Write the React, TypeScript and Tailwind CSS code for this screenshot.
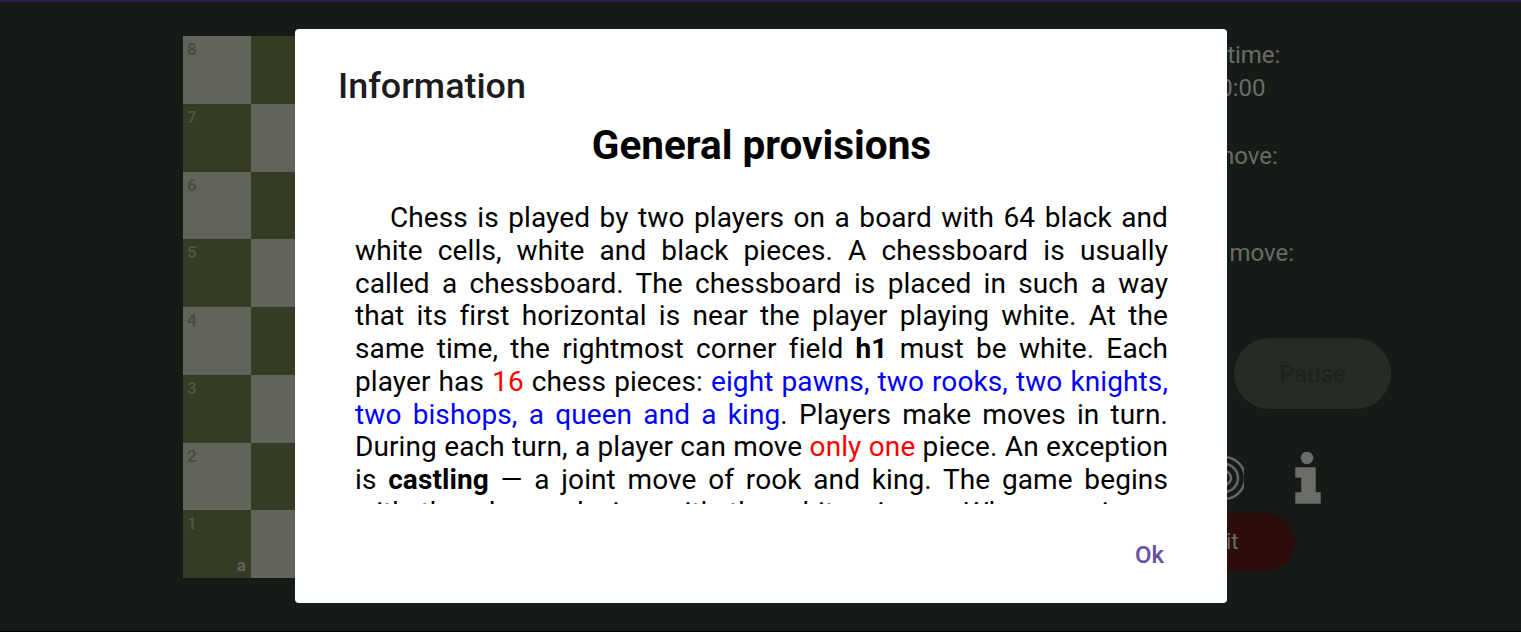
const ranks = [8, 7, 6, 5, 4, 3, 2, 1];
const files = [0, 1, 2, 3, 4, 5, 6, 7];

function Board() {
  return (
    <div className="grid h-[542px] w-[542px] shrink-0 grid-cols-8 grid-rows-8">
      {ranks.map((rank, r) =>
        files.map((file) => {
          const light = (r + file) % 2 === 0;
          return (
            <div className={`relative ${light ? "bg-[#62635a]" : "bg-[#343c24]"}`} key={`${rank}-${file}`}>
              {file === 0 && (
                <span className={`absolute left-[4px] top-[3px] text-[17px] font-bold leading-[20px] ${light ? "text-[#4a4e3d]" : "text-[#50553f]"}`}>
                  {rank}
                </span>
              )}
              {rank === 1 && file === 0 && (
                <span className="absolute bottom-[3px] right-[5px] text-[17px] font-bold leading-[20px] text-[#62635a]">a</span>
              )}
            </div>
          );
        }),
      )}
    </div>
  );
}

function Sidebar() {
  return (
    <div className="ml-[441px] flex w-[240px] shrink-0 flex-col text-[24px] leading-[32px] text-[#6a6b68]">
      <div className="mt-[3px] -ml-[8px]">Game time:</div>
      <div className="mt-[1px] pl-[7px]">00:00:00</div>
      <div className="mt-[36px] -ml-[5px]">Last move:</div>
      <div className="mt-[65px] pl-[8px]">Next move:</div>
      <div className="mt-[69px] flex items-center gap-[12px]">
        <button className="h-[71px] w-[56px] rounded-[36px] bg-[#272b26]" />
        <button className="h-[71px] w-[157px] rounded-[36px] bg-[#272b26] text-[24px] font-medium text-[#1f231e]">Pause</button>
      </div>
      <div className="mt-[38px] flex h-[64px] items-center">
        <svg className="ml-[4px] h-[60px] w-[74px]" viewBox="0 0 74 60" fill="none" stroke="#666765" strokeWidth="2.5">
          <circle cx="54" cy="29" r="7" />
          <circle cx="54" cy="29" r="14" />
          <circle cx="54" cy="29" r="21" />
        </svg>
        <svg className="mb-[2px] ml-[51px] h-[52px] w-[26px]" viewBox="0 0 26 52" fill="#6c6c6a" stroke="#6c6c6a" strokeWidth="1.5" strokeLinejoin="round">
          <circle cx="12" cy="6" r="5.5" />
          <path d="M1 16H20V41H25V51H1V41H7V25H1Z" />
        </svg>
      </div>
      <button className="mt-[2px] h-[58px] w-[129px] rounded-[29px] bg-[#2d0c0c] pr-[20px] text-[22px] text-[#6a6b68]">Exit</button>
    </div>
  );
}

function InfoDialog() {
  return (
    <div className="absolute left-[295px] top-[27px] flex h-[574px] w-[932px] flex-col rounded-[4px] bg-white">
      <h1 className="pl-[43px] pt-[36px] text-[35.9px] font-medium leading-[42px] text-[#1c1b1f]">Information</h1>
      <div className="ml-[60px] mr-[59px] mt-[15px] h-[382px] overflow-hidden text-black">
        <h2 className="text-center text-[40.5px] font-bold leading-[46px]">General provisions</h2>
        <p className="mt-[34px] text-justify indent-[35px] text-[28px] leading-[32.75px] tracking-[0.1px]">
          Chess is played by two players on a board with 64 black and white cells, white and black pieces. A chessboard is usually called a chessboard. The chessboard is placed in such a way that its first horizontal is near the player playing white. At the same time, the rightmost corner field <b>h1</b> must be white. Each player has <span className="text-[#ff0000]">16</span> chess pieces: <span className="text-[#0000ff]">eight pawns, two rooks, two knights, two bishops, a queen and a king</span>. Players make moves in turn. During each turn, a player can move <span className="text-[#ff0000]">only one</span> piece. An exception is <b>castling</b> — a joint move of rook and king. The game begins with the player playing with the white pieces. When moving a piece, the player places it on a free cell.
        </p>
      </div>
      <div className="mt-auto flex justify-end pb-[32px] pr-[63px]">
        <button className="text-[24px] font-medium leading-[32px] text-[#6750a4]">Ok</button>
      </div>
    </div>
  );
}

export default function App() {
  return (
    <div className="relative h-[632px] w-[1521px] overflow-hidden border-b border-t-2 border-b-black border-t-[#2b2148] bg-[#171b17] font-['Roboto',sans-serif]">
      <div className="flex pl-[183px] pt-[34px]">
        <Board />
        <Sidebar />
      </div>
      <InfoDialog />
    </div>
  );
}
